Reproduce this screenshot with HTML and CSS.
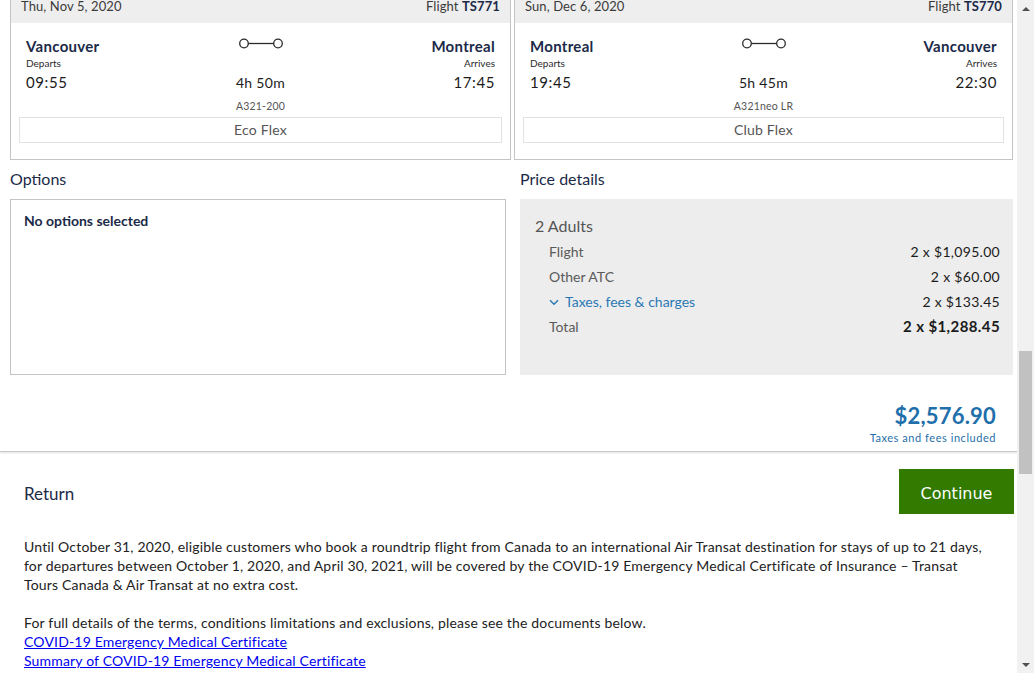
FILE: index.html
```html
<!DOCTYPE html>
<html lang="en">
<head>
<meta charset="utf-8">
<title>Review your booking</title>
<link rel="stylesheet" href="styles.css">
</head>
<body>
<div class="viewport">
  <main class="page">
    <section class="summary">
      <div class="flights">
        <article class="flight-card">
          <header class="flight-head"><span class="date">Thu, Nov 5, 2020</span><span class="flight-no">Flight <b>TS771</b></span></header>
          <div class="flight-body">
            <div class="trip">
              <div class="stop">
                <div class="city">Vancouver</div>
                <div class="note">Departs</div>
                <div class="time">09:55</div>
              </div>
              <div class="leg">
                <svg class="leg-icon" width="44" height="11" viewBox="0 0 44 11" aria-hidden="true"><circle cx="5" cy="5.5" r="4.3" fill="none" stroke="#2a2a2a" stroke-width="1.3"/><line x1="9.3" y1="5.5" x2="34.7" y2="5.5" stroke="#2a2a2a" stroke-width="1.3"/><circle cx="39" cy="5.5" r="4.3" fill="none" stroke="#2a2a2a" stroke-width="1.3"/></svg>
                <div class="duration">4h 50m</div>
                <div class="aircraft">A321-200</div>
              </div>
              <div class="stop stop-end">
                <div class="city">Montreal</div>
                <div class="note">Arrives</div>
                <div class="time">17:45</div>
              </div>
            </div>
            <div class="fare">Eco Flex</div>
          </div>
        </article>
        <article class="flight-card">
          <header class="flight-head"><span class="date">Sun, Dec 6, 2020</span><span class="flight-no">Flight <b>TS770</b></span></header>
          <div class="flight-body">
            <div class="trip">
              <div class="stop">
                <div class="city">Montreal</div>
                <div class="note">Departs</div>
                <div class="time">19:45</div>
              </div>
              <div class="leg">
                <svg class="leg-icon" width="44" height="11" viewBox="0 0 44 11" aria-hidden="true"><circle cx="5" cy="5.5" r="4.3" fill="none" stroke="#2a2a2a" stroke-width="1.3"/><line x1="9.3" y1="5.5" x2="34.7" y2="5.5" stroke="#2a2a2a" stroke-width="1.3"/><circle cx="39" cy="5.5" r="4.3" fill="none" stroke="#2a2a2a" stroke-width="1.3"/></svg>
                <div class="duration">5h 45m</div>
                <div class="aircraft">A321neo LR</div>
              </div>
              <div class="stop stop-end">
                <div class="city">Vancouver</div>
                <div class="note">Arrives</div>
                <div class="time">22:30</div>
              </div>
            </div>
            <div class="fare">Club Flex</div>
          </div>
        </article>
      </div>

      <div class="details">
        <div class="detail-col">
          <h2 class="section-title">Options</h2>
          <div class="options-box">No options selected</div>
        </div>
        <div class="detail-col">
          <h2 class="section-title">Price details</h2>
          <div class="price-box">
            <div class="pax">2 Adults</div>
            <div class="price-rows">
              <div class="price-row"><span class="label">Flight</span><span class="value">2 x $1,095.00</span></div>
              <div class="price-row"><span class="label">Other ATC</span><span class="value">2 x $60.00</span></div>
              <div class="price-row"><span class="label link-label"><svg class="chev" width="10" height="7" viewBox="0 0 10 7" aria-hidden="true"><path d="M1 1.2 L5 5.2 L9 1.2" fill="none" stroke="#2a79b5" stroke-width="1.5"/></svg>Taxes, fees &amp; charges</span><span class="value">2 x $133.45</span></div>
              <div class="price-row total-row"><span class="label">Total</span><span class="value">2 x $1,288.45</span></div>
            </div>
          </div>
        </div>
      </div>

      <div class="grand-total">
        <div class="amount">$2,576.90</div>
        <div class="amount-note">Taxes and fees included</div>
      </div>
    </section>

    <section class="actions">
      <a class="return-link">Return</a>
      <button class="continue-btn" type="button">Continue</button>
    </section>

    <section class="notice">
      <p>Until October 31, 2020, eligible customers who book a roundtrip flight from Canada to an international Air Transat destination for stays of up to 21 days, for departures between October 1, 2020, and April 30, 2021, will be covered by the COVID-19 Emergency Medical Certificate of Insurance – Transat Tours Canada &amp; Air Transat at no extra cost.</p>
      <p>For full details of the terms, conditions limitations and exclusions, please see the documents below.<br>
      <a href="#certificate">COVID-19 Emergency Medical Certificate</a><br>
      <a href="#summary">Summary of COVID-19 Emergency Medical Certificate</a></p>
    </section>
  </main>

  <div class="scrollbar" aria-hidden="true">
    <div class="sb-btn"><span class="arrow-up"></span></div>
    <div class="sb-track"><div class="sb-thumb"></div></div>
    <div class="sb-btn"><span class="arrow-down"></span></div>
  </div>
</div>
</body>
</html>
```

FILE: styles.css
```css
* { box-sizing: border-box; }

html, body {
  margin: 0;
  padding: 0;
}

body {
  font-family: Lato, "Open Sans", sans-serif;
  color: #1b2a48;
  background: #ffffff;
}

.viewport {
  display: flex;
  height: 673px;
  overflow: hidden;
}

.page {
  flex: 1;
  min-width: 0;
  overflow: hidden;
}

/* ---------- summary ---------- */
.summary {
  padding: 0 4px 6px 10px;
  border-bottom: 1px solid #c9c9c9;
  box-shadow: 0 1px 2px rgba(0, 0, 0, 0.12);
}

.flights {
  display: flex;
  gap: 3px;
  margin-top: -15px;
}

.flight-card {
  flex: 1;
  border: 1px solid #c4c4c4;
  background: #fff;
}

.flight-card:first-child { flex: 0 0 501px; }

.flight-head {
  height: 37px;
  background: #eeeeee;
  display: flex;
  align-items: flex-start;
  justify-content: space-between;
  padding: 12px 10px 0;
  font-size: 13px;
  line-height: 17px;
  letter-spacing: 0.1px;
}

.date { color: #3a3a3a; }
.flight-no { color: #3a3a3a; }
.flight-no b { color: #1b2a48; font-weight: 700; }

.flight-body {
  padding: 13px 8px 16px;
}

.trip {
  display: grid;
  grid-template-columns: 1fr auto 1fr;
  padding: 0 7px;
}

.stop { display: flex; flex-direction: column; align-items: flex-start; }
.stop-end { align-items: flex-end; }

.city {
  font-size: 15px;
  line-height: 18px;
  font-weight: 700;
  color: #1b2a48;
  letter-spacing: 0.3px;
  margin-top: 1px;
}

.note {
  font-size: 10px;
  line-height: 12px;
  margin-top: 2px;
  color: #2b2b2b;
}

.time {
  font-size: 15px;
  line-height: 18px;
  margin-top: 4px;
  color: #1b1b1b;
  letter-spacing: 0.6px;
}

.leg {
  display: flex;
  flex-direction: column;
  align-items: center;
}

.leg-icon { display: block; margin-top: 2px; }

.duration {
  font-size: 14px;
  line-height: 18px;
  margin-top: 25px;
  color: #1b1b1b;
  letter-spacing: 0.3px;
}

.aircraft {
  font-size: 10.5px;
  line-height: 14px;
  margin-top: 7px;
  color: #555;
  letter-spacing: 0.2px;
}

.fare {
  margin-top: 4px;
  height: 26px;
  border: 1px solid #e2e2e2;
  text-align: center;
  font-size: 14px;
  line-height: 24px;
  color: #555;
  letter-spacing: 0.2px;
}

/* ---------- details ---------- */
.details {
  display: grid;
  grid-template-columns: 496fr 493fr;
  gap: 14px;
}

.section-title {
  margin: 9px 0 10px;
  font-size: 16px;
  line-height: 20px;
  font-weight: 400;
  color: #1b2a48;
}

.options-box {
  height: 176px;
  border: 1px solid #c4c4c4;
  padding: 12px 13px;
  font-size: 14px;
  line-height: 18px;
  font-weight: 700;
  color: #1b2a48;
}

.price-box {
  height: 176px;
  background: #ededed;
  padding: 17px 13px 0 15px;
}

.pax {
  font-size: 16px;
  line-height: 20px;
  color: #555;
  margin-bottom: 3px;
}

.price-rows { padding-left: 14px; }

.price-row {
  display: flex;
  justify-content: space-between;
  align-items: baseline;
  font-size: 14px;
  line-height: 25px;
}

.price-row .label { color: #5a5a5a; }
.price-row .value { color: #1b1b1b; letter-spacing: 0.3px; }

.price-row .link-label { color: #2a79b5; }

.chev {
  display: inline-block;
  vertical-align: middle;
  margin: -2px 6px 0 0;
}

.total-row .value {
  font-size: 15px;
  font-weight: 700;
  letter-spacing: 0.4px;
}

.grand-total {
  text-align: right;
  padding-right: 17px;
  margin-top: 28px;
}

.amount {
  font-size: 22px;
  line-height: 26px;
  font-weight: 700;
  color: #1f6fab;
  letter-spacing: 0.2px;
}

.amount-note {
  margin-top: 2px;
  font-size: 11px;
  line-height: 14px;
  color: #1f6fab;
  letter-spacing: 0.55px;
}

/* ---------- actions ---------- */
.actions {
  display: flex;
  align-items: center;
  justify-content: space-between;
  padding: 17px 3px 0 24px;
}

.return-link {
  font-size: 17px;
  line-height: 20px;
  color: #1b2a48;
  margin-top: 4px;
}

.continue-btn {
  width: 115px;
  height: 45px;
  border: 0;
  background: #327a00;
  color: #fff;
  font-family: "DejaVu Sans", Verdana, sans-serif;
  font-size: 16px;
  padding: 4px 0 0;
}

/* ---------- notice ---------- */
.notice {
  padding: 23px 27px 0 24px;
  font-size: 14px;
  line-height: 19px;
  color: #222;
  letter-spacing: 0.17px;
}

.notice p { margin: 0 0 19px; }

.notice a { color: #0000ee; text-decoration: underline; }

/* ---------- scrollbar ---------- */
.scrollbar {
  width: 17px;
  flex: none;
  background: #f1f1f1;
  display: flex;
  flex-direction: column;
}

.sb-btn {
  height: 17px;
  display: flex;
  align-items: center;
  justify-content: center;
}

.arrow-up {
  width: 0; height: 0;
  border-left: 4px solid transparent;
  border-right: 4px solid transparent;
  border-bottom: 4px solid #505050;
}

.arrow-down {
  width: 0; height: 0;
  border-left: 4px solid transparent;
  border-right: 4px solid transparent;
  border-top: 4px solid #505050;
}

.sb-track {
  flex: 1;
  padding: 334px 2px 0;
}

.sb-thumb {
  height: 123px;
  background: #c1c1c1;
}
```
